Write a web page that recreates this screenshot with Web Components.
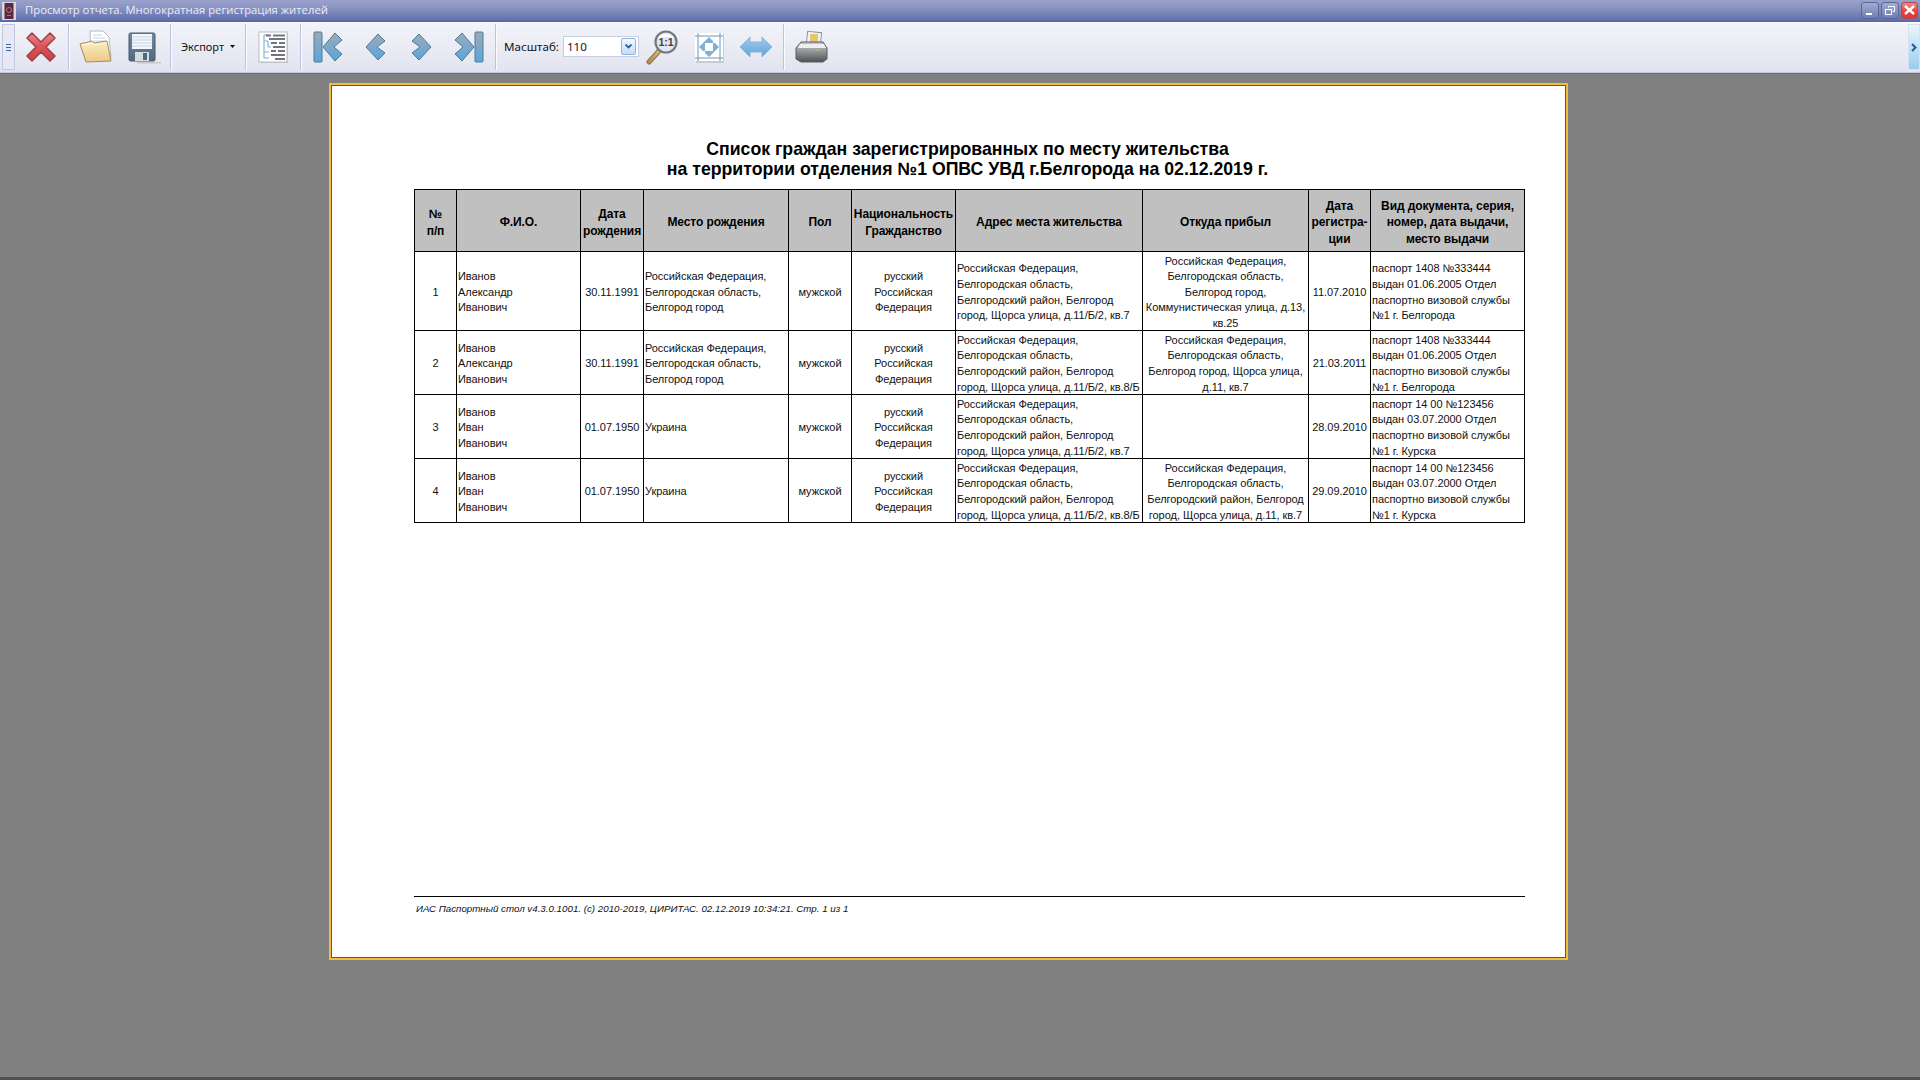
<!DOCTYPE html>
<html lang="ru">
<head>
<meta charset="utf-8">
<title>Просмотр отчета</title>
<style>
html, body { margin: 0; padding: 0; height: 100%; overflow: hidden; background: #808080; }
body { font-family: "Liberation Sans", Arial, sans-serif; }
</style>
</head>
<body>
<report-viewer>
  <viewer-titlebar slot="title">Просмотр отчета. Многократная регистрация жителей</viewer-titlebar>
  <viewer-toolbar slot="toolbar">
    <tool-button width="51" pad="-3"><tool-icon name="close"></tool-icon></tool-button>
    <tool-sep></tool-sep>
    <tool-button width="54"><tool-icon name="folder"></tool-icon></tool-button>
    <tool-button width="40"><tool-icon name="save"></tool-icon></tool-button>
    <tool-gap width="7"></tool-gap>
    <tool-sep></tool-sep>
    <tool-menu width="74">Экспорт</tool-menu>
    <tool-sep></tool-sep>
    <tool-button width="54"><tool-icon name="tree"></tool-icon></tool-button>
    <tool-sep></tool-sep>
    <tool-button width="56"><tool-icon name="first"></tool-icon></tool-button>
    <tool-button width="40"><tool-icon name="prev"></tool-icon></tool-button>
    <tool-button width="46"><tool-icon name="next"></tool-icon></tool-button>
    <tool-button width="50"><tool-icon name="last"></tool-icon></tool-button>
    <tool-gap width="2"></tool-gap>
    <tool-sep></tool-sep>
    <zoom-box value="110">Масштаб:</zoom-box>
    <tool-button width="46"><tool-icon name="actual"></tool-icon></tool-button>
    <tool-button width="48"><tool-icon name="fit"></tool-icon></tool-button>
    <tool-button width="46"><tool-icon name="width"></tool-icon></tool-button>
    <tool-gap width="4"></tool-gap>
    <tool-sep></tool-sep>
    <tool-button width="52"><tool-icon name="print"></tool-icon></tool-button>
  </viewer-toolbar>
  <report-page>
    <report-title>Список граждан зарегистрированных по месту жительства<br>на территории отделения №1 ОПВС УВД г.Белгорода на 02.12.2019 г.</report-title>
    <report-table></report-table>
    <report-footer slot="footer">ИАС Паспортный стол v4.3.0.1001. (c) 2010-2019, ЦИРИТАС. 02.12.2019 10:34:21. Стр. 1 из 1</report-footer>
  </report-page>
</report-viewer>

<script>
/**
 * Icons of the toolbar, drawn on a 36x36 box
 */
const ICONS = {
  close: `
    <defs><linearGradient id="g" x1="0" y1="0" x2="0" y2="1">
      <stop offset="0" stop-color="#e88a8c"/><stop offset=".45" stop-color="#e0565c"/><stop offset="1" stop-color="#c93c44"/>
    </linearGradient></defs>
    <path d="M9 4 18 13 27 4 32 9 23 18 32 27 27 32 18 23 9 32 4 27 13 18 4 9Z" fill="url(#g)" stroke="#9c4448" stroke-width="1.6" stroke-linejoin="round"/>`,
  folder: `
    <defs><linearGradient id="g" x1="0" y1="0" x2="0" y2="1">
      <stop offset="0" stop-color="#fbeec2"/><stop offset="1" stop-color="#ecc987"/>
    </linearGradient></defs>
    <path d="M12 2H25L31 8 33 28H13Z" fill="#fff" stroke="#b4b8c0"/>
    <path d="M15 6H24M15 9H27M15 12H28" stroke="#c4d0e4"/>
    <path d="M2 15 14 12 16 14 29 12 33 32 8 33Z" fill="url(#g)" stroke="#a38d5e" stroke-linejoin="round"/>
    <path d="M4 16 14.500 14 16.500 16 28 14" fill="none" stroke="#fffbe8"/>`,
  save: `
    <defs><linearGradient id="g" x1="0" y1="0" x2="0" y2="1">
      <stop offset="0" stop-color="#6f8ca6"/><stop offset="1" stop-color="#4d6a82"/>
    </linearGradient></defs>
    <rect x="12" y="33" width="24" height="1.500" fill="#c8c8cc"/>
    <rect x="4" y="4" width="26" height="28" rx="1.500" fill="url(#g)" stroke="#48586a"/>
    <rect x="7" y="5" width="20" height="15" fill="#f4f6fb"/>
    <path d="M7 8H27M7 11H27M7 14H27M7 17H27" stroke="#c5d3e6"/>
    <rect x="10" y="23" width="14" height="9" fill="#d6dbe2"/>
    <rect x="18" y="24" width="4" height="7" fill="#4d6a82"/>`,
  tree: `
    <rect x="5" y="4" width="28" height="30" fill="#c9cacd"/>
    <rect x="4" y="3" width="28" height="30" fill="#fff" stroke="#bcbec4"/>
    <path d="M9 6H14M9 6V29M9 12H13M13 12V18M13 18H16M9 23H14M9 29H14" fill="none" stroke="#7fb4d8" stroke-width="1.200"/>
    <path d="M11 6.500H16M18 6.500H30M14 10H30M16 14H22M24 14H30M18 18H30M16 22H21M23 22H30M16 26H30M20 30H30" stroke="#72767c" stroke-width="1.800"/>`,
  first: `
    ${blueDefs()}
    <rect x="3" y="3" width="8" height="30" rx="1" fill="url(#b)" stroke="#4c7b9c"/>
    <path d="M12 18 24 4 31 11 23 18 31 25 24 32Z" fill="url(#b)" stroke="#4c7b9c" stroke-linejoin="round"/>`,
  prev: `
    ${blueDefs()}
    <path d="M7 18 19 5 26 12 18 18 26 24 19 31Z" fill="url(#b)" stroke="#4c7b9c" stroke-linejoin="round"/>`,
  next: `
    ${blueDefs()}
    <path d="M29 18 17 5 10 12 18 18 10 24 17 31Z" fill="url(#b)" stroke="#4c7b9c" stroke-linejoin="round"/>`,
  last: `
    ${blueDefs()}
    <rect x="25" y="3" width="8" height="30" rx="1" fill="url(#b)" stroke="#4c7b9c"/>
    <path d="M24 18 12 4 5 11 13 18 5 25 12 32Z" fill="url(#b)" stroke="#4c7b9c" stroke-linejoin="round"/>`,
  actual: `
    <defs><linearGradient id="h" x1="1" y1="0" x2="0" y2="1">
      <stop offset="0" stop-color="#d8b67c"/><stop offset="1" stop-color="#b08f55"/>
    </linearGradient></defs>
    <path d="M15 22 5 33" stroke="#8e7443" stroke-width="5" stroke-linecap="round"/>
    <path d="M15 22 5 33" stroke="url(#h)" stroke-width="3" stroke-linecap="round"/>
    <circle cx="22" cy="13" r="10.500" fill="#e4e6ec" stroke="#6f7780" stroke-width="2.200"/>
    <path d="M14 9A10 10 0 0 1 30 9L28 10A9 9 0 0 0 16 10Z" fill="#fff"/>
    <text x="22" y="17" text-anchor="middle" font-family="Liberation Sans" font-size="10.500" font-weight="700" fill="#3c4046">1:1</text>`,
  fit: `
    <rect x="5" y="5" width="28" height="29" fill="#c9cacd"/>
    <rect x="4" y="4" width="28" height="28" fill="#fff"/>
    <path d="M4 7H32M4 29H32M7 4V32M29 4V32" stroke="#6a97bc" stroke-width="1"/>
    <path d="M18 8 24 14H12ZM18 28 24 22H12ZM8 18 14 12V24ZM28 18 22 12V24Z" fill="#7fb0d6"/>`,
  width: `
    <defs><linearGradient id="w" x1="0" y1="0" x2="0" y2="1">
      <stop offset="0" stop-color="#a4cdec"/><stop offset="1" stop-color="#5ea3d8"/>
    </linearGradient></defs>
    <path d="M2 18 12 8V13H24V8L34 18 24 28V23H12V28Z" fill="url(#w)" stroke="#8ab6d8" stroke-linejoin="round"/>`,
  print: `
    <defs><linearGradient id="p" x1="0" y1="0" x2="0" y2="1">
      <stop offset="0" stop-color="#c8cacc"/><stop offset=".45" stop-color="#96989b"/><stop offset="1" stop-color="#4e5155"/>
    </linearGradient></defs>
    <rect x="15" y="3" width="14" height="13" fill="#eef3f8" stroke="#8c939c" transform="rotate(6 22 9)"/>
    <rect x="18" y="5" width="8" height="8" fill="#e8c46c"/>
    <path d="M9 13H31L35 19V30L31 33H9L4 30V19Z" fill="url(#p)" stroke="#5a5d60" stroke-linejoin="round"/>
    <path d="M8 15H32L34 19H6Z" fill="#eceef0"/>
    <rect x="23" y="20" width="5" height="1.600" fill="#7ed06c"/>`
};

function blueDefs() {
  return `<defs><linearGradient id="b" x1="0" y1="0" x2="0" y2="1">
    <stop offset="0" stop-color="#a0aab4"/><stop offset=".5" stop-color="#7ba8c9"/><stop offset="1" stop-color="#59a6dc"/>
  </linearGradient></defs>`;
}

const COLUMNS = [42, 124, 63, 145, 63, 104, 187, 166, 62, 154];

const HEAD = [
  '№<br>п/п', 'Ф.И.О.', 'Дата<br>рождения', 'Место рождения', 'Пол',
  'Национальность<br>Гражданство', 'Адрес места жительства', 'Откуда прибыл',
  'Дата<br>регистра-<br>ции', 'Вид документа, серия,<br>номер, дата выдачи,<br>место выдачи'
];

const NATION = 'русский<br>Российская<br>Федерация';
const BIRTH = 'Российская Федерация,<br>Белгородская область,<br>Белгород город';
const HOME7 = 'Российская Федерация,<br>Белгородская область,<br>Белгородский район, Белгород<br>город, Щорса улица, д.11/Б/2, кв.7';
const HOME8 = 'Российская Федерация,<br>Белгородская область,<br>Белгородский район, Белгород<br>город, Щорса улица, д.11/Б/2, кв.8/Б';
const DOC1 = 'паспорт 1408 №333444<br>выдан 01.06.2005 Отдел<br>паспортно визовой службы<br>№1 г. Белгорода';
const DOC2 = 'паспорт 14 00 №123456<br>выдан 03.07.2000 Отдел<br>паспортно визовой службы<br>№1 г. Курска';

const ROWS = [
  { h: 79, c: ['1', 'Иванов<br>Александр<br>Иванович', '30.11.1991', BIRTH, 'мужской', NATION, HOME7,
    'Российская Федерация,<br>Белгородская область,<br>Белгород город,<br>Коммунистическая улица, д.13,<br>кв.25', '11.07.2010', DOC1] },
  { h: 64, c: ['2', 'Иванов<br>Александр<br>Иванович', '30.11.1991', BIRTH, 'мужской', NATION, HOME8,
    'Российская Федерация,<br>Белгородская область,<br>Белгород город, Щорса улица,<br>д.11, кв.7', '21.03.2011', DOC1] },
  { h: 64, c: ['3', 'Иванов<br>Иван<br>Иванович', '01.07.1950', 'Украина', 'мужской', NATION, HOME7, '', '28.09.2010', DOC2] },
  { h: 64, c: ['4', 'Иванов<br>Иван<br>Иванович', '01.07.1950', 'Украина', 'мужской', NATION, HOME8,
    'Российская Федерация,<br>Белгородская область,<br>Белгородский район, Белгород<br>город, Щорса улица, д.11, кв.7', '29.09.2010', DOC2] }
];

// columns whose text sits on the left
const LEFT_COLS = [1, 3, 6, 9];

class ReportViewer extends HTMLElement {
  constructor() {
    super();
    const shadowRoot = this.attachShadow({mode: 'open'});
    shadowRoot.innerHTML = `
      <style>
        :host { display: flex; flex-direction: column; height: 1080px; background: #808080; }
        .content { flex: 1; min-height: 0; padding: 9px 0 0 329px; border-top: 1px solid #6c6c6c; }
        .bottom { height: 3px; background: #4f4f4f; }
      </style>
      <slot name="title"></slot>
      <slot name="toolbar"></slot>
      <div class="content"><slot></slot></div>
      <div class="bottom"></div>
    `;
  }
}

class ViewerTitlebar extends HTMLElement {
  constructor() {
    super();
    const shadowRoot = this.attachShadow({mode: 'open'});
    shadowRoot.innerHTML = `
      <style>
        :host {
          display: flex; align-items: center; height: 22px; box-sizing: border-box; padding: 0 2px;
          background: linear-gradient(#9aa2cb, #8890c0 40%, #6272ae 90%, #56659f);
          color: #e9edf9; font: 11.300px "Open Sans", "Liberation Sans", sans-serif;
        }
        .app { width: 14px; height: 18px; flex: none; margin-right: 9px; }
        .text { flex: 1; white-space: nowrap; margin-top: -3px; }
        .btns { display: flex; gap: 2px; margin-top: -2px; }
        .btn {
          width: 18px; height: 17px; box-sizing: border-box; border: 1px solid #5a6698; border-radius: 3px;
          background: linear-gradient(#a3abd0, #6f7db4); display: flex; align-items: center; justify-content: center;
        }
        .btn.red { width: 17px; background: linear-gradient(#f08a80, #e8413a 55%, #d93a36); border-color: #a84c58; }
      </style>
      <svg class="app" viewBox="0 0 14 18">
        <rect width="14" height="18" fill="#d8d8dc"/>
        <rect x="2.500" y="1" width="9" height="16" fill="#5c2745"/>
        <circle cx="7" cy="8" r="2.500" fill="none" stroke="#a87a6c"/>
        <rect x="5" y="13" width="4" height="1" fill="#a87a6c"/>
      </svg>
      <div class="text"><slot></slot></div>
      <div class="btns">
        <div class="btn"><svg width="10" height="10"><rect x="1" y="8" width="6" height="2" fill="#fff"/></svg></div>
        <div class="btn"><svg width="12" height="11" fill="none" stroke="#fff"><rect x="1.500" y="4.500" width="6" height="5"/><path d="M4.500 2.500V1.500H10.500V6.500H8.500" stroke-width="1"/></svg></div>
        <div class="btn red"><svg width="11" height="10" stroke="#fff" stroke-width="2.400"><path d="M1 1 10 9M10 1 1 9"/></svg></div>
      </div>
    `;
  }
}

class ViewerToolbar extends HTMLElement {
  constructor() {
    super();
    const shadowRoot = this.attachShadow({mode: 'open'});
    shadowRoot.innerHTML = `
      <style>
        :host {
          display: flex; height: 51px; box-sizing: border-box; padding: 1px 0 2px 2px;
          border-top: 1px solid #fbfbfe; border-bottom: 1px solid #c3c9e2;
          background: linear-gradient(#f3f4f9, #e1e3ef);
          font: 11px "Noto Sans", "Liberation Sans", sans-serif; color: #111;
        }
        .grip {
          width: 13px; flex: none; margin-right: 2px; box-sizing: border-box; border: 1px solid #c2c8e2;
          background: #e6e8f3; display: flex; align-items: center; justify-content: center;
        }
        .items { flex: 1; display: flex; align-items: stretch; min-width: 0; }
        .more {
          width: 12px; flex: none; margin-left: 2px; display: flex; align-items: center; justify-content: center;
          background: linear-gradient(#eef6fc, #bcdff6 55%, #9ccbec); border: 1px solid #d6e0f0; box-sizing: border-box;
        }
      </style>
      <div class="grip"><svg width="5" height="7"><path d="M0 .5H5M0 3.500H5M0 6.500H5" stroke="#3b64b0"/></svg></div>
      <div class="items"><slot></slot></div>
      <div class="more"><svg width="6" height="9" fill="none" stroke="#25589e" stroke-width="2"><path d="M1 1 4.500 4.500 1 8"/></svg></div>
    `;
  }
}

class ToolButton extends HTMLElement {
  constructor() {
    super();
    const shadowRoot = this.attachShadow({mode: 'open'});
    shadowRoot.innerHTML = `
      <style>
        :host { display: flex; flex: none; align-items: center; justify-content: center; }
      </style>
      <slot></slot>
    `;
  }
  connectedCallback() {
    this.style.width = this.getAttribute('width') + 'px';
    if (this.hasAttribute('pad')) this.style.paddingRight = -this.getAttribute('pad') + 'px';
    if (this.hasAttribute('pad')) this.style.boxSizing = 'border-box';
  }
}

class ToolIcon extends HTMLElement {
  constructor() {
    super();
    this.attachShadow({mode: 'open'});
  }
  connectedCallback() {
    this.shadowRoot.innerHTML = `
      <style>
        :host { display: block; width: 36px; height: 36px; }
        svg { display: block; }
      </style>
      <svg width="36" height="36" viewBox="0 0 36 36">${ICONS[this.getAttribute('name')]}</svg>
    `;
  }
}

class ToolSep extends HTMLElement {
  constructor() {
    super();
    const shadowRoot = this.attachShadow({mode: 'open'});
    shadowRoot.innerHTML = `
      <style>
        :host { display: block; flex: none; width: 1px; background: #bcc3de; box-shadow: 1px 0 0 #fafbfe; }
      </style>
    `;
  }
}

class ToolGap extends HTMLElement {
  constructor() {
    super();
    const shadowRoot = this.attachShadow({mode: 'open'});
    shadowRoot.innerHTML = `<style>:host { display: block; flex: none; }</style>`;
  }
  connectedCallback() {
    this.style.width = this.getAttribute('width') + 'px';
  }
}

class ToolMenu extends HTMLElement {
  constructor() {
    super();
    const shadowRoot = this.attachShadow({mode: 'open'});
    shadowRoot.innerHTML = `
      <style>
        :host { display: flex; flex: none; align-items: center; box-sizing: border-box; padding-left: 10px; white-space: nowrap; margin-top: -2px; }
        svg { margin-left: 6px; }
      </style>
      <slot></slot>
      <svg width="5" height="3"><path d="M0 0H5L2.500 3Z" fill="#111"/></svg>
    `;
  }
  connectedCallback() {
    this.style.width = this.getAttribute('width') + 'px';
  }
}

class ZoomBox extends HTMLElement {
  constructor() {
    super();
    this.attachShadow({mode: 'open'});
  }
  connectedCallback() {
    this.shadowRoot.innerHTML = `
      <style>
        :host { display: flex; flex: none; align-items: center; width: 143px; box-sizing: border-box; padding-left: 8px; white-space: nowrap; font-size: 11.600px; margin-top: -2px; }
        .combo {
          width: 76px; height: 21px; margin-left: 4px; box-sizing: border-box; flex: none; background: #fff;
          border: 1px solid #c5cde4; display: flex; align-items: center; justify-content: space-between;
          padding: 0 2px 0 3px; color: #2a0a2e;
        }
        .arrow {
          width: 15px; height: 17px; box-sizing: border-box; border: 1px solid #8fb4dc; border-radius: 2px;
          background: linear-gradient(#f2f8fe, #c4dcf4); display: flex; align-items: center; justify-content: center;
        }
      </style>
      <slot></slot>
      <div class="combo">
        <span>${this.getAttribute('value')}</span>
        <div class="arrow"><svg width="7" height="5" fill="none" stroke="#2c5a9e" stroke-width="1.800"><path d="M.5 .5 3.500 3.500 6.500 .5"/></svg></div>
      </div>
    `;
  }
}

class ReportPage extends HTMLElement {
  constructor() {
    super();
    const shadowRoot = this.attachShadow({mode: 'open'});
    shadowRoot.innerHTML = `
      <style>
        :host {
          display: flex; flex-direction: column; width: 1239px; height: 877px; box-sizing: border-box;
          border: 2px solid #f6bd3c; background: #fff; box-shadow: inset 0 0 0 1px #565656;
          padding: 54px 41px 0 83px; color: #000;
        }
        .foot { margin-top: auto; }
      </style>
      <slot></slot>
      <div class="foot"><slot name="footer"></slot></div>
    `;
  }
}

class ReportTitle extends HTMLElement {
  constructor() {
    super();
    const shadowRoot = this.attachShadow({mode: 'open'});
    shadowRoot.innerHTML = `
      <style>
        :host {
          display: block; height: 40px; margin-bottom: 10px; padding-right: 4px; text-align: center;
          font: bold 17.700px/20px "Liberation Sans", sans-serif; white-space: nowrap;
        }
      </style>
      <slot></slot>
    `;
  }
}

class ReportTable extends HTMLElement {
  constructor() {
    super();
    const shadowRoot = this.attachShadow({mode: 'open'});
    const cols = COLUMNS.map(w => `<col style="width:${w}px">`).join('');
    const head = HEAD.map(t => `<th>${t}</th>`).join('');
    const rows = ROWS.map(r => `<tr style="height:${r.h}px">` + r.c.map((t, i) =>
      `<td class="${LEFT_COLS.includes(i) ? 'left' : ''}"><div class="cell" style="height:${r.h - 1}px"><span>${t}</span></div></td>`).join('') + `</tr>`).join('');
    shadowRoot.innerHTML = `
      <style>
        :host { display: block; }
        table { border-collapse: collapse; table-layout: fixed; width: 1110px; }
        th, td { border: 1px solid #000; padding: 0 1px; overflow: hidden; white-space: nowrap; text-align: center; vertical-align: middle; }
        th {
          background: #c0c0c0; font: bold 12px/16.500px "Liberation Sans", sans-serif; letter-spacing: -.1px; padding: 4px 0 0;
        }
        thead tr { height: 62px; }
        td { font: 11px/15.600px "Liberation Sans", sans-serif; color: #111; letter-spacing: -.05px; }
        td.left { text-align: left; }
        .cell { display: flex; flex-direction: column; justify-content: center; box-sizing: border-box; padding-top: 3px; }
      </style>
      <table>
        <colgroup>${cols}</colgroup>
        <thead><tr>${head}</tr></thead>
        <tbody>${rows}</tbody>
      </table>
    `;
  }
}

class ReportFooter extends HTMLElement {
  constructor() {
    super();
    const shadowRoot = this.attachShadow({mode: 'open'});
    shadowRoot.innerHTML = `
      <style>
        :host {
          display: block; box-sizing: border-box; height: 62px; border-top: 1px solid #000; padding-left: 2px;
          font: italic 9.750px/24px "Liberation Sans", sans-serif; white-space: nowrap; color: #111;
        }
      </style>
      <slot></slot>
    `;
  }
}

customElements.define('report-viewer', ReportViewer);
customElements.define('viewer-titlebar', ViewerTitlebar);
customElements.define('viewer-toolbar', ViewerToolbar);
customElements.define('tool-button', ToolButton);
customElements.define('tool-icon', ToolIcon);
customElements.define('tool-sep', ToolSep);
customElements.define('tool-gap', ToolGap);
customElements.define('tool-menu', ToolMenu);
customElements.define('zoom-box', ZoomBox);
customElements.define('report-page', ReportPage);
customElements.define('report-title', ReportTitle);
customElements.define('report-table', ReportTable);
customElements.define('report-footer', ReportFooter);
</script>
</body>
</html>
